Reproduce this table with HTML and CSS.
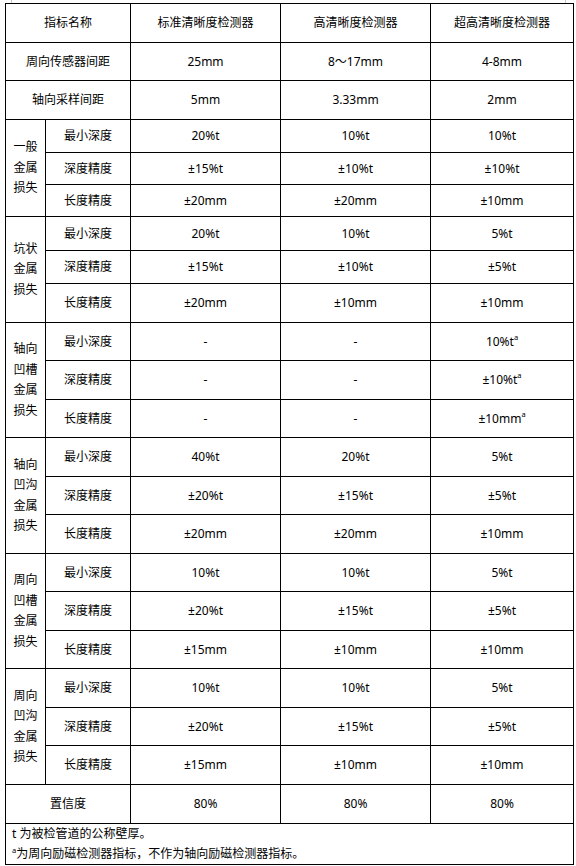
FILE: index.html
```html
<!DOCTYPE html>
<html lang="zh-CN">
<head>
<meta charset="utf-8">
<title>检测器指标</title>
<link rel="stylesheet" href="styles.css">
</head>
<body>
<div class="crop-marks"></div>
<table class="spec">
  <colgroup>
    <col class="c-cat"><col class="c-sub"><col class="c-val"><col class="c-val"><col class="c-last">
  </colgroup>
  <tr class="h39">
    <td colspan="2">指标名称</td><td>标准清晰度检测器</td><td>高清晰度检测器</td><td>超高清晰度检测器</td>
  </tr>
  <tr class="h38">
    <td colspan="2">周向传感器间距</td><td>25mm</td><td>8～17mm</td><td>4-8mm</td>
  </tr>
  <tr class="h39">
    <td colspan="2">轴向采样间距</td><td>5mm</td><td>3.33mm</td><td>2mm</td>
  </tr>

  <tr class="h33">
    <td rowspan="3" class="cat">一般<br>金属<br>损失</td><td>最小深度</td><td>20%t</td><td>10%t</td><td>10%t</td>
  </tr>
  <tr class="h32"><td>深度精度</td><td>±15%t</td><td>±10%t</td><td>±10%t</td></tr>
  <tr class="h32"><td>长度精度</td><td>±20mm</td><td>±20mm</td><td>±10mm</td></tr>

  <tr class="h34">
    <td rowspan="3" class="cat">坑状<br>金属<br>损失</td><td>最小深度</td><td>20%t</td><td>10%t</td><td>5%t</td>
  </tr>
  <tr class="h33"><td>深度精度</td><td>±15%t</td><td>±10%t</td><td>±5%t</td></tr>
  <tr class="h39"><td>长度精度</td><td>±20mm</td><td>±10mm</td><td>±10mm</td></tr>

  <tr class="h38">
    <td rowspan="3" class="cat">轴向<br>凹槽<br>金属<br>损失</td><td>最小深度</td><td>-</td><td>-</td><td>10%t<sup class="sup">a</sup></td>
  </tr>
  <tr class="h39"><td>深度精度</td><td>-</td><td>-</td><td>±10%t<sup class="sup">a</sup></td></tr>
  <tr class="h38"><td>长度精度</td><td>-</td><td>-</td><td>±10mm<sup class="sup">a</sup></td></tr>

  <tr class="h39">
    <td rowspan="3" class="cat">轴向<br>凹沟<br>金属<br>损失</td><td>最小深度</td><td>40%t</td><td>20%t</td><td>5%t</td>
  </tr>
  <tr class="h38"><td>深度精度</td><td>±20%t</td><td>±15%t</td><td>±5%t</td></tr>
  <tr class="h39"><td>长度精度</td><td>±20mm</td><td>±20mm</td><td>±10mm</td></tr>

  <tr class="h38">
    <td rowspan="3" class="cat">周向<br>凹槽<br>金属<br>损失</td><td>最小深度</td><td>10%t</td><td>10%t</td><td>5%t</td>
  </tr>
  <tr class="h39"><td>深度精度</td><td>±20%t</td><td>±15%t</td><td>±5%t</td></tr>
  <tr class="h38"><td>长度精度</td><td>±15mm</td><td>±10mm</td><td>±10mm</td></tr>

  <tr class="h39">
    <td rowspan="3" class="cat">周向<br>凹沟<br>金属<br>损失</td><td>最小深度</td><td>10%t</td><td>10%t</td><td>5%t</td>
  </tr>
  <tr class="h38"><td>深度精度</td><td>±20%t</td><td>±15%t</td><td>±5%t</td></tr>
  <tr class="h39"><td>长度精度</td><td>±15mm</td><td>±10mm</td><td>±10mm</td></tr>

  <tr class="h39">
    <td colspan="2">置信度</td><td>80%</td><td>80%</td><td>80%</td>
  </tr>
  <tr class="h40">
    <td colspan="5" class="notes">
      <div class="note">t 为被检管道的公称壁厚。</div>
      <div class="note"><sup class="sup">a</sup>为周向励磁检测器指标，不作为轴向励磁检测器指标。</div>
    </td>
  </tr>
</table>
</body>
</html>
```

FILE: styles.css
```css
html, body {
  margin: 0;
  padding: 0;
  background: #fff;
}
body {
  font-family: "Noto Sans", "Noto Sans CJK SC", sans-serif;
  font-size: 12px;
  color: #000;
}
.crop-marks {
  height: 3px;
  margin-left: 11px;
  margin-right: 10px;
  border-left: 1px solid #c8c8c8;
  border-right: 1px solid #c8c8c8;
}
.spec {
  margin-left: 5px;
  width: 569px;
  border-collapse: collapse;
  table-layout: fixed;
}
.c-cat { width: 40px; }
.c-sub { width: 85px; }
.c-val { width: 150px; }
.c-last { width: 143px; }
.spec td {
  border: 1px solid #000;
  padding: 0 4px;
  text-align: center;
  vertical-align: middle;
  line-height: 16px;
  white-space: nowrap;
}
.spec td.cat {
  line-height: 20.5px;
  padding: 0;
}
.h32 { height: 32px; }
.h33 { height: 33px; }
.h34 { height: 34px; }
.h38 { height: 38px; }
.h39 { height: 39px; }
.h40 { height: 40px; }
.sup {
  font-size: 7.5px;
  line-height: 0;
  vertical-align: 6px;
}
.spec td.notes {
  text-align: left;
  padding: 0 6px;
  line-height: 20px;
}
.note .sup {
  vertical-align: 5px;
}
```
